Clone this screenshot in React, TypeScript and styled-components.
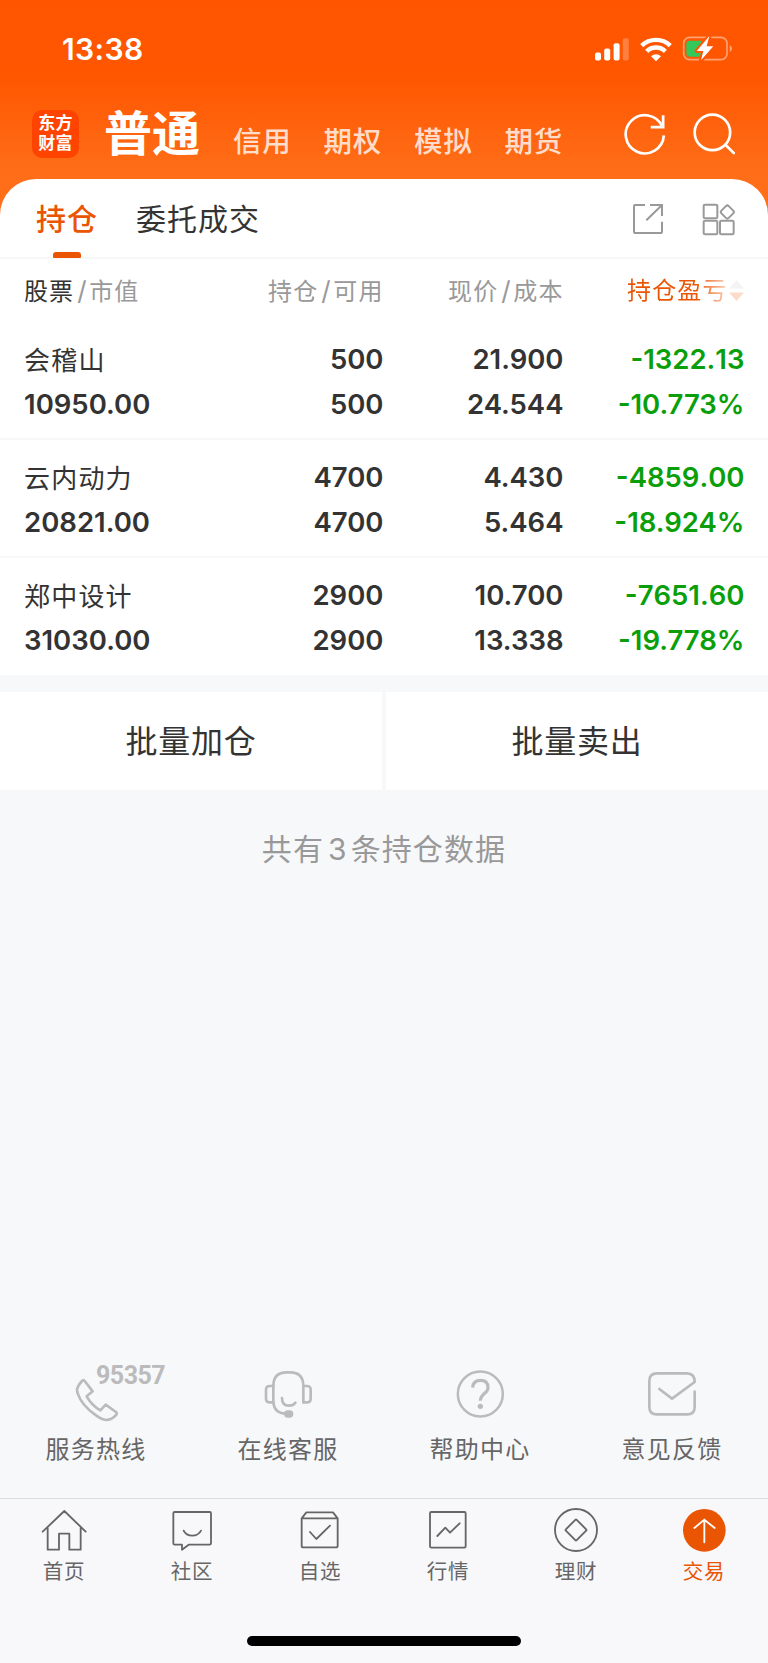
import React from "react";
import styled, { createGlobalStyle } from "styled-components";

const GlobalStyle = createGlobalStyle`
  * { box-sizing: border-box; }
  body {
    margin: 0;
    background: #f7f8fa;
    font-family: Inter, "Noto Sans CJK SC", sans-serif;
    color: #333;
  }
`;

const Screen = styled.div`
  display: flex;
  flex-direction: column;
  width: 768px;
  height: 1663px;
  overflow: hidden;
  background: #f7f8fa;
`;

const Top = styled.header`
  display: flex;
  flex-direction: column;
  background: linear-gradient(to bottom, #ff5500 0, #ff5600 75px, #ff6d18 170px, #ff6f1b 220px);
`;

const StatusBar = styled.div`
  display: flex;
  align-items: center;
  justify-content: space-between;
  height: 98px;
  padding: 0 35px 0 62px;
`;

const Clock = styled.span`
  font-size: 30px;
  font-weight: 600;
  line-height: 36px;
  letter-spacing: 0.4px;
  color: #fff;
`;

const StatusIcons = styled.div`
  display: flex;
  align-items: center;
  gap: 9.5px;
`;

const NavBar = styled.div`
  display: flex;
  align-items: center;
  height: 81px;
  padding: 0 33px 10px 32px;
`;

const Logo = styled.div`
  display: flex;
  flex-direction: column;
  align-items: center;
  justify-content: center;
  width: 47px;
  height: 48px;
  border-radius: 10px;
  background: #ff4400;
  color: #fff;
  font-size: 17px;
  font-weight: 700;
  line-height: 20.5px;
  letter-spacing: 0.3px;
  padding: 0 0 1px;
`;

const Accounts = styled.nav`
  display: flex;
  align-items: flex-end;
  flex: 1;
  margin-left: 25px;
`;

const CurrentAccount = styled.span`
  font-size: 48px;
  font-weight: 700;
  line-height: 56px;
  margin-right: 33px;
  color: #fff;
`;

const Account = styled.span`
  width: 90.5px;
  padding-bottom: 3px;
  font-size: 28.5px;
  font-weight: 500;
  line-height: 34px;
  letter-spacing: 0.7px;
  color: rgba(255, 255, 255, 0.8);
`;

const NavActions = styled.div`
  display: flex;
  gap: 25.5px;
`;

const Tabs = styled.div`
  display: flex;
  height: 80px;
  padding: 0 32px 0 36px;
  background: #fff;
  border-radius: 36px 36px 0 0;
  border-bottom: 2px solid #f7f7f8;
`;

const Tab = styled.div<{ $active?: boolean }>`
  display: flex;
  flex-direction: column;
  align-items: center;
  justify-content: space-between;
  margin-right: 38px;
  padding-top: 20px;
  font-size: 30px;
  line-height: 40px;
  letter-spacing: 1px;
  font-weight: ${(p) => (p.$active ? 500 : 400)};
  color: ${(p) => (p.$active ? "#ea5504" : "#333")};
`;

const Underline = styled.i`
  width: 28px;
  height: 6px;
  margin-bottom: -1px;
  border-radius: 3px 3px 1px 1px;
  background: #ea5504;
`;

const TabActions = styled.div`
  display: flex;
  align-items: flex-start;
  gap: 38px;
  margin-left: auto;
  padding-top: 24px;
`;

const Holdings = styled.section`
  background: #fff;
`;

const columns = `
  display: grid;
  grid-template-columns: 179.5px 180px 180px 180px;
  padding: 0 24px 0 24px;
`;

const ColumnHeads = styled.div`
  ${columns}
  height: 63px;
  padding-top: 13.5px;
  font-size: 24px;
  line-height: 36px;
  letter-spacing: 1.1px;
  color: #999;
`;

const Head = styled.div<{ $right?: boolean }>`
  text-align: ${(p) => (p.$right ? "right" : "left")};
  white-space: nowrap;
`;

const Strong = styled.span`
  color: #333;
`;

const Slash = styled.span`
  margin: 0 1.5px 0 3px;
  font-size: 26px;
`;

const SortHead = styled.div`
  display: flex;
  align-items: center;
  justify-content: flex-end;
  height: 36px;
`;

const FadingLabel = styled.span`
  margin-right: 1px;
  color: transparent;
  background: linear-gradient(to right, #ea5504 0 68%, #ea550440 100%);
  background-clip: text;
`;

const Row = styled.div`
  ${columns}
  height: 118px;
  padding-top: 14.5px;
  border-bottom: 2px solid #f8f8f9;
  &:last-child {
    height: 117px;
    border-bottom: 0;
  }
`;

const Cell = styled.div<{ $right?: boolean; $loss?: boolean }>`
  display: flex;
  flex-direction: column;
  align-items: ${(p) => (p.$right ? "flex-end" : "flex-start")};
  margin-right: ${(p) => (p.$loss ? "-1px" : "0")};
  color: ${(p) => (p.$loss ? "#0a9f0a" : "#333")};
`;

const Name = styled.span`
  height: 45px;
  font-size: 26px;
  line-height: 47px;
  letter-spacing: 1.2px;
`;

const Value = styled.span<{ $loose?: boolean }>`
  font-size: 27.5px;
  font-weight: 600;
  line-height: 45px;
  font-kerning: ${(p) => (p.$loose ? "none" : "auto")};
`;

const BatchBar = styled.div`
  display: grid;
  grid-template-columns: 1fr 1fr;
  gap: 4px;
  margin-top: 16.5px;
`;

const BatchButton = styled.button`
  height: 98.5px;
  border: 0;
  padding: 0 0 4px;
  background: #fff;
  font-family: inherit;
  font-size: 32px;
  letter-spacing: 0.8px;
  color: #333;
`;

const Summary = styled.p`
  margin: 38px 0 0;
  text-align: center;
  font-size: 30px;
  line-height: 42px;
  letter-spacing: 1.1px;
  color: #999;
`;

const Count = styled.span`
  margin: 0 3px 0 4px;
`;

const Services = styled.div`
  display: grid;
  grid-template-columns: repeat(4, 1fr);
  margin-top: auto;
  height: 128px;
`;

const Service = styled.div`
  display: flex;
  flex-direction: column;
  align-items: center;
  font-size: 24px;
  line-height: 36px;
  letter-spacing: 1.3px;
  color: #666;
`;

const ServiceIcon = styled.div`
  position: relative;
  height: 62px;
  line-height: 0;
`;

const Hotline = styled.span`
  position: absolute;
  left: 26px;
  top: -8px;
  font-family: Roboto, sans-serif;
  font-size: 25px;
  font-weight: 700;
  line-height: 28px;
  letter-spacing: -0.5px;
  color: #bbb;
`;

const TabBar = styled.footer`
  display: grid;
  grid-template-columns: repeat(6, 1fr);
  height: 138px;
  padding-top: 7px;
  border-top: 1px solid #dcdddf;
  background: #f8f8fa;
`;

const TabItem = styled.div<{ $active?: boolean }>`
  display: flex;
  flex-direction: column;
  align-items: center;
  font-size: 20.5px;
  line-height: 36px;
  letter-spacing: 0.8px;
  color: ${(p) => (p.$active ? "#ea5504" : "#666")};
`;

const HomeBar = styled.div`
  flex: none;
  height: 27px;
  background: #f8f8fa;
  &::before {
    content: "";
    display: block;
    width: 274px;
    height: 10px;
    margin: 0 auto;
    border-radius: 5px;
    background: #000;
  }
`;

const Glyph = styled.svg<{ $w?: number }>`
  display: block;
  flex: none;
  fill: none;
  stroke: currentColor;
  stroke-width: ${(p) => p.$w ?? 5.5};
  stroke-linecap: round;
  stroke-linejoin: round;
`;

const SignalIcon = () => (
  <svg width="35" height="23" viewBox="0 0 35 23" fill="#fff">
    <rect x="0" y="14.5" width="6" height="8" rx="2" />
    <rect x="9.2" y="10.5" width="6" height="12" rx="2" />
    <rect x="18.6" y="5.2" width="6" height="17.3" rx="2" />
    <rect x="27.8" y="0.2" width="6" height="22.3" rx="2" opacity="0.25" />
  </svg>
);

const WifiIcon = () => (
  <svg width="32" height="25" viewBox="0 0 96 75" fill="none" stroke="#fff" strokeWidth="13">
    <path d="M5 26A62 62 0 0 1 91 26" />
    <path d="M20 43A40 40 0 0 1 76 43" />
    <path d="M48 73L33 58Q48 46 63 58Z" fill="#fff" stroke="none" />
  </svg>
);

const BatteryIcon = () => (
  <svg width="52" height="28" viewBox="0 0 156 84">
    <rect x="8" y="7" width="130" height="67" rx="18" fill="none" stroke="#fff" strokeOpacity="0.45" strokeWidth="5" />
    <path d="M146 30Q153 33 153 40.500T146 51Z" fill="#fff" fillOpacity="0.45" />
    <path d="M26 17H62V65H26Q16 65 16 55V27Q16 17 26 17Z" fill="#34c759" />
    <path d="M85 3L47 48H67L60 76L97 34H77Z" fill="#fff" stroke="#ff5500" strokeWidth="12" strokeLinejoin="round" paintOrder="stroke" />
  </svg>
);

const RefreshIcon = () => (
  <Glyph width="43.5" height="43.5" viewBox="0 0 130 130" $w={8} color="#fff">
    <path d="M122 70A57 57 0 1 1 117 43" strokeLinecap="butt" />
    <path d="M120 10V45H83" strokeLinecap="butt" strokeLinejoin="miter" />
  </Glyph>
);

const SearchIcon = () => (
  <Glyph width="43.5" height="43.5" viewBox="0 0 130 130" $w={8} color="#fff">
    <circle cx="61" cy="61" r="53" />
    <path d="M100 98L125 123" />
  </Glyph>
);

const ShareIcon = () => (
  <Glyph width="32" height="32" viewBox="0 0 96 96" $w={6} color="#999">
    <path d="M39 6H9Q6 6 6 9V87Q6 90 9 90H87Q90 90 90 87V56" strokeLinecap="butt" />
    <path d="M54 6H90V39M90 6L43 52" strokeLinecap="butt" strokeLinejoin="miter" />
  </Glyph>
);

const GridIcon = () => (
  <Glyph width="34" height="34" viewBox="0 0 102 102" $w={6} color="#999">
    <rect x="5" y="5" width="41" height="41" rx="4" />
    <rect x="5" y="53" width="41" height="41" rx="4" />
    <rect x="54" y="53" width="41" height="41" rx="4" />
    <rect x="60.500" y="11.500" width="31" height="31" rx="6" transform="rotate(45 76 27)" />
  </Glyph>
);

const PhoneIcon = () => (
  <Glyph width="52" height="52" viewBox="0 0 156 156" $w={8} color="#bbb">
    <path d="M36 33Q40 27 44 33L68 64L50 79Q65 106 91 121L107 104L138 126Q142 129 139 134Q126 150 108 150Q95 149 75 134Q35 105 23 70Q19 58 24 50Q28 42 36 33Z" />
  </Glyph>
);

const HeadsetIcon = () => (
  <Glyph width="52" height="52" viewBox="0 0 156 156" $w={8} color="#bbb">
    <path d="M124 97V48Q124 7 84 7H74Q34 7 34 48V97Q37 130 72 131" />
    <path d="M34 48H24Q12 48 12 59V86Q12 97 24 97H34M124 48H134Q146 48 146 59V86Q146 97 134 97H124" />
    <path d="M60 84Q60 107 81 107Q94 107 100 98" />
    <rect x="66" y="121" width="28" height="22" rx="11" fill="currentColor" stroke="none" />
  </Glyph>
);

const HelpIcon = () => (
  <Glyph width="52" height="52" viewBox="0 0 156 156" $w={7.5} color="#bbb">
    <circle cx="79" cy="72" r="67.500" />
    <path d="M56 53Q57 31 80 31Q102 31 102 53Q102 62 92 70Q79 81 79 92" strokeWidth="9.500" strokeLinecap="butt" />
    <circle cx="79" cy="109" r="8" fill="currentColor" stroke="none" />
  </Glyph>
);

const MailIcon = () => (
  <Glyph width="52" height="52" viewBox="0 0 156 156" $w={8} color="#bbb">
    <path d="M146 65V110Q146 133 123 133H33Q10 133 10 110V33Q10 10 33 10H123Q146 10 146 36L78 86L40 57" />
  </Glyph>
);

const HomeIcon = () => (
  <Glyph width="48" height="48" viewBox="0 0 144 144">
    <path d="M8 77L73 15L137 77M23 66V131H57V83H88V131H122V66" />
  </Glyph>
);

const CommunityIcon = () => (
  <Glyph width="48" height="48" viewBox="0 0 144 144">
    <path d="M20 18H125Q129 18 129 22V112Q129 116 125 116H62L42 131V116H20Q16 116 16 112V22Q16 18 20 18Z" />
    <path d="M47 74Q54 89 73 89Q91 89 99 74" />
  </Glyph>
);

const WatchlistIcon = () => (
  <Glyph width="48" height="48" viewBox="0 0 144 144">
    <path d="M17 37L31 19H111L125 37V119Q125 124 120 124H22Q17 124 17 119ZM17 37H125M42 78L61 99L102 59" />
  </Glyph>
);

const MarketIcon = () => (
  <Glyph width="48" height="48" viewBox="0 0 144 144">
    <rect x="18" y="18" width="107" height="107" rx="4" />
    <path d="M40 90L64 65L78 80L107 52" />
  </Glyph>
);

const WealthIcon = () => (
  <Glyph width="48" height="48" viewBox="0 0 144 144">
    <circle cx="72" cy="72" r="63" />
    <rect x="49" y="49" width="46" height="46" rx="3" transform="rotate(45 72 72)" />
  </Glyph>
);

const TradeIcon = () => (
  <Glyph width="48" height="48" viewBox="0 0 144 144">
    <circle cx="73" cy="73" r="64" fill="currentColor" stroke="none" />
    <path d="M73 109V41M43 66L73 41L104 66" stroke="#fff" />
  </Glyph>
);

const SortIcon = () => (
  <svg width="15" height="21" viewBox="0 0 15 21">
    <path d="M7.500 0L15 8.500H0Z" fill="#f4f4f5" />
    <path d="M0 12.500H15L7.500 21Z" fill="#fbdccb" />
  </svg>
);

const accounts = ["信用", "期权", "模拟", "期货"];

const holdings = [
  { name: "会稽山", value: "10950.00", held: "500", usable: "500", price: "21.900", cost: "24.544", pnl: "-1322.13", rate: "-10.773%" },
  { name: "云内动力", value: "20821.00", held: "4700", usable: "4700", price: "4.430", cost: "5.464", pnl: "-4859.00", rate: "-18.924%" },
  { name: "郑中设计", value: "31030.00", held: "2900", usable: "2900", price: "10.700", cost: "13.338", pnl: "-7651.60", rate: "-19.778%" },
];

const services = [
  { label: "服务热线", icon: <PhoneIcon />, phone: "95357" },
  { label: "在线客服", icon: <HeadsetIcon /> },
  { label: "帮助中心", icon: <HelpIcon /> },
  { label: "意见反馈", icon: <MailIcon /> },
];

const tabItems = [
  { label: "首页", icon: <HomeIcon /> },
  { label: "社区", icon: <CommunityIcon /> },
  { label: "自选", icon: <WatchlistIcon /> },
  { label: "行情", icon: <MarketIcon /> },
  { label: "理财", icon: <WealthIcon /> },
  { label: "交易", icon: <TradeIcon />, active: true },
];

export default function App() {
  return (
    <Screen>
      <GlobalStyle />
      <Top>
        <StatusBar>
          <Clock>13:38</Clock>
          <StatusIcons>
            <SignalIcon />
            <WifiIcon />
            <BatteryIcon />
          </StatusIcons>
        </StatusBar>
        <NavBar>
          <Logo>
            <span>东方</span>
            <span>财富</span>
          </Logo>
          <Accounts>
            <CurrentAccount>普通</CurrentAccount>
            {accounts.map((a) => (
              <Account key={a}>{a}</Account>
            ))}
          </Accounts>
          <NavActions>
            <RefreshIcon />
            <SearchIcon />
          </NavActions>
        </NavBar>
        <Tabs>
          <Tab $active>
            持仓
            <Underline />
          </Tab>
          <Tab>委托成交</Tab>
          <TabActions>
            <ShareIcon />
            <GridIcon />
          </TabActions>
        </Tabs>
      </Top>

      <Holdings>
        <ColumnHeads>
          <Head><Strong>股票</Strong><Slash>/</Slash>市值</Head>
          <Head $right>持仓<Slash>/</Slash>可用</Head>
          <Head $right>现价<Slash>/</Slash>成本</Head>
          <SortHead>
            <FadingLabel>持仓盈亏</FadingLabel>
            <SortIcon />
          </SortHead>
        </ColumnHeads>
        {holdings.map((h) => (
          <Row key={h.name}>
            <Cell>
              <Name>{h.name}</Name>
              <Value>{h.value}</Value>
            </Cell>
            <Cell $right>
              <Value>{h.held}</Value>
              <Value>{h.usable}</Value>
            </Cell>
            <Cell $right>
              <Value>{h.price}</Value>
              <Value>{h.cost}</Value>
            </Cell>
            <Cell $right $loss>
              <Value $loose>{h.pnl}</Value>
              <Value>{h.rate}</Value>
            </Cell>
          </Row>
        ))}
      </Holdings>

      <BatchBar>
        <BatchButton>批量加仓</BatchButton>
        <BatchButton>批量卖出</BatchButton>
      </BatchBar>
      <Summary>共有<Count>3</Count>条持仓数据</Summary>

      <Services>
        {services.map((s) => (
          <Service key={s.label}>
            <ServiceIcon>
              {s.icon}
              {s.phone && <Hotline>{s.phone}</Hotline>}
            </ServiceIcon>
            {s.label}
          </Service>
        ))}
      </Services>
      <TabBar>
        {tabItems.map((t) => (
          <TabItem key={t.label} $active={t.active}>
            {t.icon}
            {t.label}
          </TabItem>
        ))}
      </TabBar>
      <HomeBar />
    </Screen>
  );
}
